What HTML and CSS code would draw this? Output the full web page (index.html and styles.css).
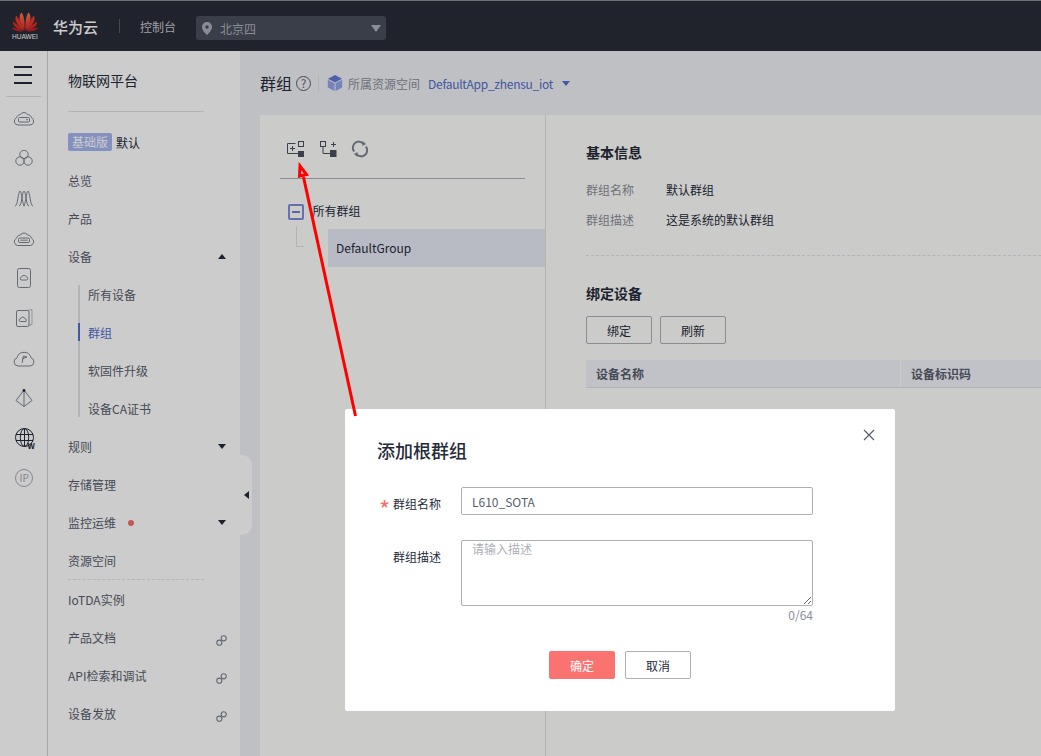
FILE: index.html
```html
<!DOCTYPE html>
<html lang="en">
<head>
    <meta charset="UTF-8">
    <meta name="viewport" content="width=device-width, initial-scale=1.0">
    <title>群组</title>
    <link rel="stylesheet" href="styles.css">
</head>
<body>

    <header class="topbar">
        <div class="logo">
            <svg width="26" height="20" viewBox="0 0 26 20">
                <defs>
                    <linearGradient id="petal" x1="0" y1="0" x2="0" y2="1">
                        <stop offset="0" stop-color="#f47a5c"/>
                        <stop offset="1" stop-color="#e0201c"/>
                    </linearGradient>
                </defs>
                <g id="fan">
                    <path fill="url(#petal)" d="M13.600 19C13 12 13.400 5 16.400 .4 19.600 3 19.400 9 13.600 19z"/>
                    <path fill="#e8372c" d="M14.300 19C16 13 18.400 7 21.800 3.600 24.200 7 21.600 12.600 14.300 19z"/>
                    <path fill="#de2a24" d="M15 19.200C17.500 15.500 21 11.500 25 9.400 26 13 22 16 15 19.200z"/>
                    <path fill="#cf211e" d="M15.500 19.600C18.500 17.500 22 15.800 26 15.500 25 18.200 20 19.600 15.500 19.600z"/>
                </g>
                <g transform="matrix(-1 0 0 1 26 0)">
                    <path fill="url(#petal)" d="M13.600 19C13 12 13.400 5 16.400 .4 19.600 3 19.400 9 13.600 19z"/>
                    <path fill="#e8372c" d="M14.300 19C16 13 18.400 7 21.800 3.600 24.200 7 21.600 12.600 14.300 19z"/>
                    <path fill="#de2a24" d="M15 19.200C17.500 15.500 21 11.500 25 9.400 26 13 22 16 15 19.200z"/>
                    <path fill="#cf211e" d="M15.500 19.600C18.500 17.500 22 15.800 26 15.500 25 18.200 20 19.600 15.500 19.600z"/>
                </g>
            </svg>
            <span class="logo-text">HUAWEI</span>
        </div>
        <span class="brand">华为云</span>
        <span class="topbar-sep"></span>
        <span class="console">控制台</span>
        <div class="region">
            <svg class="region-pin" width="10" height="13" viewBox="0 0 10 13">
                <path d="M5 0a5 5 0 0 1 5 5c0 3-3 6-5 8-2-2-5-5-5-8a5 5 0 0 1 5-5zm0 3.200a1.800 1.800 0 1 0 0 3.600 1.800 1.800 0 0 0 0-3.600z"/>
            </svg>
            <span class="region-name">北京四</span>
            <span class="caret caret-region"></span>
        </div>
    </header>

    <div class="layout">
        <nav class="rail">
            <div class="hamburger"><span></span><span></span><span></span></div>
            <div class="rail-icons">
                <svg viewBox="0 0 24 24"><path d="M6 19h12a3.800 3.800 0 0 0 1.600-7.200C19 9.500 17 8.500 15.500 8.500 14.500 6 9.500 6 8.500 8.500 7 8.500 5 9.500 4.400 11.800A3.800 3.800 0 0 0 6 19z"/><rect x="6.500" y="11.500" width="11" height="4.500" rx="1"/><path d="M14 13.700h2"/></svg>
                <svg viewBox="0 0 24 24"><circle cx="12" cy="8.500" r="4.200"/><circle cx="8" cy="15" r="4.200"/><circle cx="16" cy="15" r="4.200"/></svg>
                <svg viewBox="0 0 24 24"><path d="M3 20c3 0 3-15 5-15s2 15 5 15"/><path d="M7 20c3 0 3-15 5-15s2 15 5 15"/><path d="M11 20c3 0 3-15 5-15s2 15 5 15"/></svg>
                <svg viewBox="0 0 24 24"><path d="M6 19.500h12a3.800 3.800 0 0 0 1.600-7.200C19 10 17 9 15.500 9 14.500 6.500 9.500 6.500 8.500 9 7 9 5 10 4.400 12.300A3.800 3.800 0 0 0 6 19.500z"/><rect x="6.500" y="12" width="11" height="4.500" rx="1.500"/><path d="M8.500 14.200h7"/></svg>
                <svg viewBox="0 0 24 24"><rect x="5.500" y="2.500" width="13" height="19" rx="2"/><path d="M9.800 14h4.500a1.500 1.500 0 0 0 .2-3 2.700 2.700 0 0 0-5 0 1.500 1.500 0 0 0 .3 3z"/></svg>
                <svg viewBox="0 0 24 24"><path class="faint" d="M15 4.500l5-1v15l-3 .8"/><rect x="4.500" y="4.500" width="12.500" height="16" rx="1.500"/><path d="M8.500 15.500h4.500a1.300 1.300 0 0 0 .2-2.600 2.500 2.500 0 0 0-4.800 0 1.300 1.300 0 0 0 .1 2.600z"/></svg>
                <svg viewBox="0 0 24 24"><path d="M6 20h12a4.200 4.200 0 0 0 1-8.200 7.200 7.200 0 0 0-14 0A4.200 4.200 0 0 0 6 20z"/><path d="M10 17l1.500-7 3.500 1-5 2"/></svg>
                <svg viewBox="0 0 24 24"><path d="M12 4L4 14.500l8 6 8-6z"/><path d="M12 4v16.500"/><circle class="solid" cx="12" cy="4.500" r="1.400"/></svg>
                <svg class="globe" viewBox="0 0 24 24"><circle cx="12.500" cy="11.500" r="9"/><ellipse cx="12.500" cy="11.500" rx="4.200" ry="9"/><path d="M4 8.500h17M4 14.500h17M12.500 2.500v18"/><text x="15.500" y="22.500">W</text></svg>
                <svg class="faded" viewBox="0 0 24 24"><circle cx="12" cy="12" r="8.500"/><text x="7.600" y="15.500">IP</text></svg>
            </div>
        </nav>

        <aside class="sidebar">
            <h2 class="sidebar-title">物联网平台</h2>
            <div class="edition"><span class="tag">基础版</span><span class="edition-name">默认</span></div>
            <a class="menu-item">总览</a>
            <a class="menu-item">产品</a>
            <a class="menu-item">设备<span class="caret caret-up"></span></a>
            <div class="submenu">
                <a class="submenu-item">所有设备</a>
                <a class="submenu-item active">群组</a>
                <a class="submenu-item">软固件升级</a>
                <a class="submenu-item">设备CA证书</a>
            </div>
            <a class="menu-item">规则<span class="caret caret-down"></span></a>
            <a class="menu-item">存储管理</a>
            <a class="menu-item">监控运维<span class="red-dot"></span><span class="caret caret-down"></span></a>
            <a class="menu-item">资源空间</a>
            <div class="menu-dash"></div>
            <a class="menu-item">IoTDA实例</a>
            <a class="menu-item">产品文档<svg class="link-icon" viewBox="0 0 10 10"><circle cx="3" cy="7" r="2.300"/><circle cx="7" cy="3" r="2.300"/></svg></a>
            <a class="menu-item">API检索和调试<svg class="link-icon" viewBox="0 0 10 10"><circle cx="3" cy="7" r="2.300"/><circle cx="7" cy="3" r="2.300"/></svg></a>
            <a class="menu-item">设备发放<svg class="link-icon" viewBox="0 0 10 10"><circle cx="3" cy="7" r="2.300"/><circle cx="7" cy="3" r="2.300"/></svg></a>
            <div class="collapse-handle"><span class="caret caret-left"></span></div>
        </aside>

        <main class="main">
            <div class="page-head">
                <h1 class="page-title">群组</h1>
                <span class="help">?</span>
                <span class="head-sep"></span>
                <svg class="cube" width="16" height="16" viewBox="0 0 16 16">
                    <path fill="#5f78d8" d="M8 0l7 3.700L8 7.400 1 3.700z"/>
                    <path fill="#94a6ea" d="M.8 4.700L7.500 8.300V16L.8 12.400z"/>
                    <path fill="#94a6ea" d="M15.200 4.700L8.500 8.300V16l6.700-3.600z"/>
                </svg>
                <span class="space-label">所属资源空间</span>
                <a class="space-link">DefaultApp_zhensu_iot</a>
                <span class="caret caret-space"></span>
            </div>

            <div class="panel">
                <section class="tree-pane">
                    <div class="tree-tools">
                        <svg width="18" height="18" viewBox="0 0 18 18">
                            <path class="thin" d="M8.500 3.500H.5v10h11"/>
                            <path class="thin" d="M3 8.500h5M5.500 6v5"/>
                            <rect class="thin" x="11.500" y="1.500" width="5" height="5"/>
                            <rect x="11" y="11" width="6" height="6"/>
                        </svg>
                        <svg width="18" height="18" viewBox="0 0 18 18">
                            <rect class="thin" x="1.500" y="1.500" width="5" height="5"/>
                            <path class="thin" d="M4 7v6.500h7M12 4.500h5M14.500 2v5"/>
                            <rect x="11" y="10" width="6.500" height="7"/>
                        </svg>
                        <svg class="tool-refresh" width="18" height="18" viewBox="0 0 18 18">
                            <path class="thick" d="M3.200 11.500A6 6 0 0 1 12.500 3.800"/>
                            <path class="thick" d="M14.800 6.500A6 6 0 0 1 5.500 14.200"/>
                            <path d="M11.500 1l3.500 3-3.500 2zM6.500 17L3 14l3.500-2z"/>
                        </svg>
                    </div>
                    <div class="tree-root">
                        <span class="tree-toggle"></span>
                        <span class="tree-label">所有群组</span>
                    </div>
                    <div class="tree-child">
                        <span class="tree-branch"></span>
                        <span class="tree-node">DefaultGroup</span>
                    </div>
                </section>

                <section class="detail-pane">
                    <h3 class="section-title">基本信息</h3>
                    <div class="info-list">
                        <span class="info-key">群组名称</span><span class="info-value">默认群组</span>
                        <span class="info-key">群组描述</span><span class="info-value">这是系统的默认群组</span>
                    </div>
                    <div class="detail-dash"></div>
                    <h3 class="section-title">绑定设备</h3>
                    <div class="detail-actions">
                        <button class="btn">绑定</button>
                        <button class="btn">刷新</button>
                    </div>
                    <div class="device-table">
                        <span class="device-col">设备名称</span>
                        <span class="device-col">设备标识码</span>
                    </div>
                </section>
            </div>
        </main>
    </div>

    <div class="overlay"></div>

    <div class="dialog">
        <h2 class="dialog-title">添加根群组</h2>
        <svg class="dialog-close" width="12" height="12" viewBox="0 0 12 12"><path d="M1 1l10 10M11 1L1 11"/></svg>
        <form class="dialog-form">
            <label class="form-label"><span class="required">*</span>群组名称</label>
            <input class="form-input" type="text" value="L610_SOTA">
            <label class="form-label">群组描述</label>
            <div>
                <textarea class="form-textarea" placeholder="请输入描述"></textarea>
                <div class="form-count">0/64</div>
            </div>
        </form>
        <div class="dialog-actions">
            <button class="btn btn-primary">确定</button>
            <button class="btn btn-plain">取消</button>
        </div>
    </div>

    <!-- red annotation on top of the screenshot -->
    <svg class="annotation" width="1041" height="756" viewBox="0 0 1041 756">
        <path d="M355.500 416L303.500 177"/>
        <path d="M300 166L299.500 176 306.500 174.500z"/>
    </svg>

</body>
</html>
```

FILE: styles.css
```css
* {
    box-sizing: border-box;
}

html, body {
    margin: 0;
    height: 100%;
}

body {
    position: relative;
    width: 1041px;
    height: 756px;
    overflow: hidden;
    display: flex;
    flex-direction: column;
    font-family: "Noto Sans CJK SC", "Noto Sans", sans-serif;
    font-size: 12px;
    color: #575d6c;
    background-color: #eff0f5;
}

h1, h2, h3 {
    margin: 0;
}

/* small triangles */
.caret {
    display: block;
    width: 0;
    height: 0;
    border-style: solid;
    border-color: transparent;
}

.caret-down {
    margin-left: auto;
    margin-right: 14px;
    border-width: 5px 4px 0;
    border-top-color: #252b3a;
}

.caret-up {
    margin-left: auto;
    margin-right: 14px;
    border-width: 0 4px 5px;
    border-bottom-color: #252b3a;
}

.caret-left {
    border-width: 4px 5px 4px 0;
    border-right-color: #252b3a;
}

.caret-space {
    margin-left: 9px;
    border-width: 5px 4px 0;
    border-top-color: #526ecc;
}

.caret-region {
    margin-left: auto;
    margin-right: 1px;
    border-width: 7px 5px 0;
    border-top-color: #aeb1b9;
}

/* top bar */
.topbar {
    flex: none;
    height: 51px;
    display: flex;
    align-items: center;
    padding-left: 12px;
    background-color: #282c38;
    border-top: 1px solid #8a8c92;
}

.logo {
    width: 26px;
    display: flex;
    flex-direction: column;
    align-items: center;
    margin-top: 1px;
}

.logo svg {
    display: block;
}

.logo-text {
    margin-top: 1px;
    font-family: "Liberation Sans", sans-serif;
    font-size: 6.5px;
    line-height: 8px;
    color: #fff;
}

.brand {
    margin-left: 15px;
    font-size: 15px;
    font-weight: 500;
    color: #fff;
}

.topbar-sep {
    width: 1px;
    height: 14px;
    margin-left: 21px;
    background-color: #555a68;
}

.console {
    margin-left: 20px;
    color: #c6c8ce;
}

.region {
    width: 190px;
    height: 24px;
    margin: 4px 0 0 20px;
    padding: 0 4px 0 6px;
    display: flex;
    align-items: center;
    border-radius: 3px;
    background-color: #494e5c;
}

.region-pin {
    fill: #aeb1b9;
}

.region-name {
    margin-left: 8px;
    color: #aeb1b9;
}

/* icon rail */
.layout {
    flex: 1;
    min-height: 0;
    display: flex;
}

.rail {
    flex: none;
    width: 48px;
    background-color: #fff;
    border-right: 1px solid #d0d2da;
}

.hamburger {
    width: 18px;
    margin: 15px 0 0 14px;
    display: flex;
    flex-direction: column;
    gap: 6px;
}

.hamburger span {
    height: 2px;
    background-color: #252b3a;
}

.rail-icons {
    margin: 12px 6px 0;
    padding-top: 9px;
    border-top: 1px solid #dfe1e6;
    display: flex;
    flex-direction: column;
    align-items: center;
    gap: 16px;
}

.rail-icons svg {
    width: 24px;
    height: 24px;
    fill: none;
    stroke: #7f8491;
    stroke-width: 1;
}

.rail-icons .faint {
    stroke: #b8bbc4;
}

.rail-icons .solid {
    fill: #252b3a;
    stroke: none;
}

.rail-icons .globe {
    stroke: #252b3a;
}

.rail-icons .faded {
    stroke: #a6a9b2;
}

.rail-icons text {
    font-size: 10px;
    fill: #a6a9b2;
    stroke: none;
}

.rail-icons .globe text {
    font-size: 8px;
    font-weight: 700;
    fill: #252b3a;
}

/* sidebar menu */
.sidebar {
    position: relative;
    flex: none;
    width: 192px;
    padding-left: 20px;
    background-color: #fff;
}

.sidebar-title {
    width: 136px;
    height: 61px;
    padding-top: 18px;
    font-size: 14px;
    line-height: 22px;
    font-weight: 400;
    color: #252b3a;
    border-bottom: 1px solid #dfe1e6;
}

.edition {
    height: 38px;
    margin-top: 11px;
    display: flex;
    align-items: center;
    gap: 4px;
}

.tag {
    width: 44px;
    height: 18px;
    line-height: 18px;
    text-align: center;
    border-radius: 2px;
    color: #fff;
    background-color: #a5b4ee;
}

.edition-name {
    color: #252b3a;
}

.menu-item {
    height: 38px;
    display: flex;
    align-items: center;
}

.submenu {
    height: 132px;
    margin: 10px 0 10px 10px;
    display: flex;
    flex-direction: column;
    justify-content: space-between;
    border-left: 2px solid #dfe1e6;
}

.submenu-item {
    height: 18px;
    line-height: 20px;
    padding-left: 8px;
}

.submenu-item.active {
    margin-left: -2px;
    padding-left: 8px;
    border-left: 2px solid #526ecc;
    color: #526ecc;
}

.red-dot {
    width: 6px;
    height: 6px;
    margin: 2px 0 0 12px;
    border-radius: 50%;
    background-color: #f66f6a;
}

.menu-dash {
    width: 136px;
    border-top: 1px dashed #dfe1e6;
}

.link-icon {
    width: 11px;
    height: 11px;
    margin: 6px 13px 0 auto;
    fill: none;
    stroke: #7f8491;
    stroke-width: 1;
}

.collapse-handle {
    position: absolute;
    top: 404px;
    left: 192px;
    width: 12px;
    height: 80px;
    display: flex;
    align-items: center;
    justify-content: center;
    border-radius: 0 10px 10px 0;
    background-color: #fff;
}

/* page header */
.main {
    flex: 1;
    min-width: 0;
    display: flex;
    flex-direction: column;
    padding-left: 20px;
}

.page-head {
    flex: none;
    height: 64px;
    display: flex;
    align-items: center;
}

.page-title {
    font-size: 16px;
    font-weight: 400;
    color: #252b3a;
}

.help {
    width: 15px;
    height: 15px;
    margin-left: 4px;
    border: 1.500px solid #575d6c;
    border-radius: 50%;
    font-size: 11px;
    line-height: 12px;
    text-align: center;
    color: #575d6c;
}

.head-sep {
    width: 1px;
    height: 17px;
    margin: 0 8px 0 7px;
    background-color: #dfe1e6;
}

.space-label {
    margin-left: 5px;
    color: #8a8e99;
}

.space-link {
    margin-left: 8px;
    letter-spacing: -0.28px;
    color: #526ecc;
}

/* white panel */
.panel {
    flex: 1;
    min-height: 0;
    display: flex;
    background-color: #fefefc;
}

.tree-pane {
    flex: none;
    width: 286px;
    padding: 0 20px;
    border-right: 1px solid #dfe1e6;
}

.tree-tools {
    height: 64px;
    width: 245px;
    padding: 25px 0 0 7px;
    display: flex;
    gap: 14px;
    border-bottom: 1px solid #adb0b8;
}

.tree-tools svg {
    fill: #4a5060;
}

.tree-tools .thin {
    fill: none;
    stroke: #4a5060;
    stroke-width: 1;
}

.tree-tools .thick {
    fill: none;
    stroke: #7f8491;
    stroke-width: 2;
}

.tool-refresh {
    fill: #7f8491 !important;
}

.tree-root {
    height: 16px;
    margin: 25px 0 0 8px;
    display: flex;
    align-items: center;
    gap: 8.500px;
    color: #252b3a;
}

.tree-label {
    padding-bottom: 4px;
}

.tree-toggle {
    position: relative;
    width: 16px;
    height: 16px;
    border: 2px solid #7e8cdc;
    border-radius: 2px;
}

.tree-toggle::after {
    content: "";
    position: absolute;
    left: 2px;
    top: 5px;
    width: 8px;
    height: 2px;
    background-color: #6f7fd6;
}

.tree-child {
    display: flex;
    margin: 9px -20px 0 16px;
}

.tree-branch {
    width: 8px;
    height: 21px;
    margin-top: -3px;
    border-left: 1px solid #dfe1e6;
    border-bottom: 1px solid #dfe1e6;
}

.tree-node {
    flex: 1;
    height: 38px;
    margin-left: 24px;
    padding-left: 8px;
    line-height: 38px;
    color: #252b3a;
    background-color: #e6e9f5;
}

.detail-pane {
    flex: 1;
    min-width: 0;
    padding: 28px 0 0 40px;
}

.section-title {
    height: 20px;
    font-size: 14px;
    line-height: 18px;
    font-weight: 700;
    color: #252b3a;
}

.info-list {
    display: grid;
    grid-template-columns: 80px 1fr;
    row-gap: 10px;
    margin-top: 17px;
    line-height: 20px;
}

.info-key {
    color: #8a8e99;
}

.info-value {
    color: #252b3a;
}

.detail-dash {
    margin: 25px 0 28px;
    border-top: 1px dashed #dfe1e6;
}

.detail-actions {
    display: flex;
    gap: 8px;
    margin-top: 12px;
}

.btn {
    width: 66px;
    height: 28px;
    padding: 0;
    font-family: inherit;
    font-size: 12px;
    color: #252b3a;
    background-color: transparent;
    border: 1px solid #adb0b8;
    border-radius: 2px;
}

.device-table {
    display: grid;
    grid-template-columns: 314px 1fr;
    height: 28px;
    margin-top: 16px;
    font-weight: 700;
    line-height: 27px;
    background-color: #f2f3f9;
    border-bottom: 1px solid #dfe1e6;
}

.device-col {
    padding-left: 10px;
}

.device-col + .device-col {
    border-left: 1px solid #fefefc;
}

/* modal */
.overlay {
    position: absolute;
    inset: 0;
    background-color: rgba(0, 0, 0, 0.2);
}

.dialog {
    position: absolute;
    left: 345px;
    top: 409px;
    width: 550px;
    height: 302px;
    padding: 28px 32px 0;
    border-radius: 2px;
    background-color: #fff;
}

.dialog-title {
    font-size: 18px;
    line-height: 26px;
    font-weight: 500;
    color: #252b3a;
}

.dialog-close {
    position: absolute;
    top: 20px;
    right: 20px;
    fill: none;
    stroke: #575d6c;
    stroke-width: 1.200;
}

.dialog-form {
    display: grid;
    grid-template-columns: 64px 352px;
    column-gap: 20px;
    row-gap: 19px;
    margin-top: 24px;
}

.form-label {
    position: relative;
    line-height: 34px;
    text-align: right;
    color: #252b3a;
}

.required {
    position: absolute;
    left: 2px;
    top: 5px;
    font-size: 24px;
    color: #f66f6a;
}

.form-input {
    height: 28px;
    padding: 0 10px;
    font-family: inherit;
    font-size: 12px;
    color: #575d6c;
    border: 1px solid #adb0b8;
    border-radius: 2px;
    outline: none;
}

.form-textarea {
    display: block;
    width: 352px;
    height: 66px;
    padding: 0 10px;
    font-family: inherit;
    font-size: 12px;
    line-height: 16px;
    border: 1px solid #adb0b8;
    border-radius: 2px;
    outline: none;
}

.form-textarea::placeholder {
    color: #adb0b8;
}

.form-count {
    line-height: 18px;
    text-align: right;
    color: #8a8e99;
}

.dialog-actions {
    display: flex;
    justify-content: center;
    gap: 10px;
    margin-top: 27px;
}

.btn-primary {
    color: #fff;
    background-color: #fa7370;
    border-color: #fa7370;
}

.btn-plain {
    background-color: #fff;
}

.annotation {
    position: absolute;
    left: 0;
    top: 0;
    fill: none;
    stroke: #fe0000;
    stroke-width: 3;
}
```
